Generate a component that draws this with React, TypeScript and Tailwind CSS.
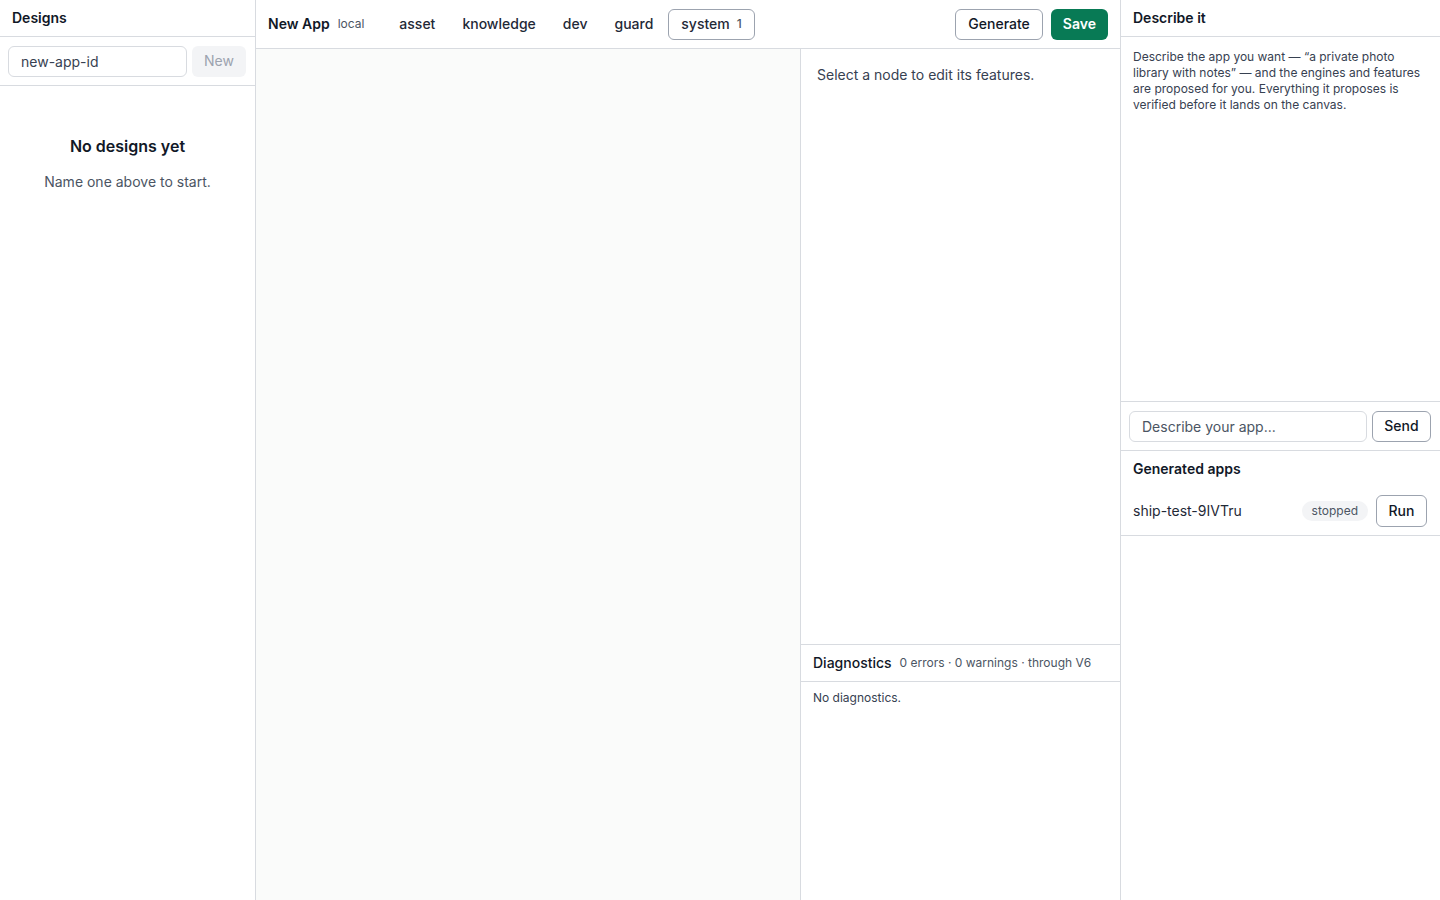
import React, { useState } from 'react';

const tabs = ['asset', 'knowledge', 'dev', 'guard'];

const apps = [{ name: 'ship-test-9IVTru', status: 'stopped' }];

export default function App() {
  const [designId, setDesignId] = useState('new-app-id');
  const [prompt, setPrompt] = useState('');

  return (
    <div
      className="flex h-[900px] w-[1440px] overflow-hidden bg-white text-[#111827]"
      style={{ fontFamily: 'Inter, "Noto Sans", sans-serif' }}
    >
      {/* Designs sidebar */}
      <aside className="flex w-[256px] shrink-0 flex-col border-r border-[#d8dbe0]">
        <div className="flex h-[37px] items-center border-b border-[#d8dbe0] px-3 text-sm font-semibold">
          Designs
        </div>
        <div className="flex h-[49px] items-center gap-[5px] border-b border-[#d8dbe0] px-2">
          <input
            value={designId}
            onChange={(e) => setDesignId(e.target.value)}
            className="h-[31px] w-[179px] rounded-md border border-[#d8dbe0] px-3 text-sm text-[#374151] outline-none"
          />
          <button className="h-[31px] w-[54px] rounded-md bg-[#f3f4f6] text-sm text-[#9ca3af]">New</button>
        </div>
        <div className="flex flex-col items-center pt-[48px]">
          <div className="text-base font-semibold">No designs yet</div>
          <div className="mt-[14px] text-sm text-[#4b5563]">Name one above to start.</div>
        </div>
      </aside>

      {/* Main */}
      <main className="flex min-w-0 flex-1 flex-col">
        <div className="flex h-[49px] shrink-0 items-center border-b border-[#d8dbe0] pl-3 pr-3">
          <span className="text-sm font-semibold">New App</span>
          <span className="ml-2 text-xs text-[#4b5563]">local</span>
          <div className="ml-[23px] flex items-center gap-[3px]">
            {tabs.map((t) => (
              <button key={t} className="h-[31px] rounded-md px-3 text-sm font-medium text-[#1f2937]">
                {t}
              </button>
            ))}
            <button className="flex h-[31px] items-center gap-[7px] rounded-md border border-[#9ca3af] px-3 text-sm font-medium text-[#1f2937]">
              system <span className="text-xs text-[#4b5563]">1</span>
            </button>
          </div>
          <div className="ml-auto flex items-center gap-2">
            <button className="h-[31px] rounded-md border border-[#9ca3af] px-3 text-sm font-medium">
              Generate
            </button>
            <button className="h-[31px] rounded-md bg-[#087a55] px-3 text-sm font-semibold text-white">
              Save
            </button>
          </div>
        </div>
        <div className="flex min-h-0 flex-1">
          <div className="flex-1 bg-[#fafbfa]" />
          <div className="flex w-[320px] shrink-0 flex-col border-l border-[#d8dbe0]">
            <div className="flex-1 px-4 pt-[16px] text-sm text-[#374151]">
              Select a node to edit its features.
            </div>
            <div className="h-[256px] border-t border-[#d8dbe0]">
              <div className="flex h-[37px] items-center gap-2 border-b border-[#d8dbe0] px-3">
                <span className="text-sm font-medium">Diagnostics</span>
                <span className="text-xs text-[#4b5563]">0 errors · 0 warnings · through V6</span>
              </div>
              <div className="px-3 pt-[8px] text-xs text-[#374151]">No diagnostics.</div>
            </div>
          </div>
        </div>
      </main>

      {/* Describe it */}
      <aside className="flex w-[320px] shrink-0 flex-col border-l border-[#d8dbe0]">
        <div className="flex h-[37px] items-center border-b border-[#d8dbe0] px-3 text-sm font-semibold">
          Describe it
        </div>
        <div className="h-[365px] border-b border-[#d8dbe0] px-3 pt-[12px] text-xs leading-4 text-[#374151]">
          Describe the app you want — “a private photo library with notes” — and the engines and features are
          proposed for you. Everything it proposes is verified before it lands on the canvas.
        </div>
        <div className="flex h-[49px] items-center gap-[5px] border-b border-[#d8dbe0] px-2">
          <input
            value={prompt}
            onChange={(e) => setPrompt(e.target.value)}
            placeholder="Describe your app..."
            className="h-[31px] w-[238px] rounded-md border border-[#d8dbe0] px-3 text-sm outline-none placeholder:text-[#4b5563]"
          />
          <button className="h-[31px] w-[59px] rounded-md border border-[#9ca3af] text-sm font-medium">Send</button>
        </div>
        <div className="border-b border-[#d8dbe0] pb-[8px]">
          <div className="px-3 pt-[8px] text-sm font-semibold">Generated apps</div>
          {apps.map((a) => (
            <div key={a.name} className="mt-[16px] flex h-[32px] items-center px-3 pr-[13px]">
              <span className="text-sm text-[#1f2937]">{a.name}</span>
              <span className="ml-auto rounded-full bg-[#f3f4f6] px-[10px] py-[2px] text-xs text-[#4b5563]">
                {a.status}
              </span>
              <button className="ml-2 h-[32px] w-[51px] rounded-md border border-[#9ca3af] text-sm font-medium">
                Run
              </button>
            </div>
          ))}
        </div>
      </aside>
    </div>
  );
}
